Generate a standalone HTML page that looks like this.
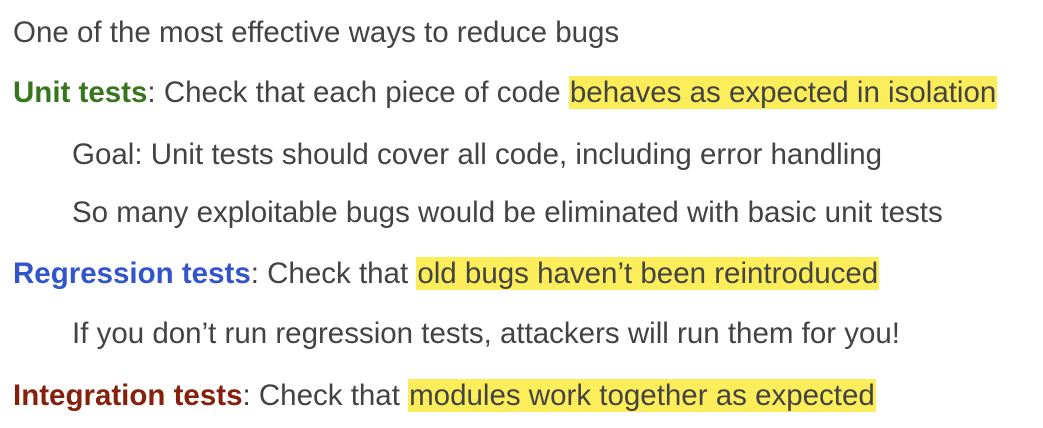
<!DOCTYPE html>
<html><head><style>
body{margin:0;width:1043px;height:428px;background:#fff;overflow:hidden;font-family:"Liberation Sans",Arial,sans-serif;font-size:29.5px;color:#434343;}
.l{position:absolute;white-space:nowrap;line-height:32px;}
.h{background:#fcee5a;padding:0 1px;}
.g{color:#38761d;font-weight:bold}
.b{color:#3355cc;font-weight:bold}
.r{color:#85200c;font-weight:bold}
</style></head><body>
<div class="l" style="left:13px;top:17px">One of the most effective ways to reduce bugs</div>
<div class="l" style="left:13px;top:77px"><span class="g">Unit tests</span>: Check that each piece of code <span class="h">behaves as expected in isolation</span></div>
<div class="l" style="left:72px;top:139px">Goal: Unit tests should cover all code, including error handling</div>
<div class="l" style="left:72px;top:197px">So many exploitable bugs would be eliminated with basic unit tests</div>
<div class="l" style="left:13px;top:258px"><span class="b">Regression tests</span>: Check that <span class="h">old bugs haven’t been reintroduced</span></div>
<div class="l" style="left:72px;top:318px">If you don’t run regression tests, attackers will run them for you!</div>
<div class="l" style="left:13px;top:380px"><span class="r">Integration tests</span>: Check that <span class="h">modules work together as expected</span></div>
</body></html>
